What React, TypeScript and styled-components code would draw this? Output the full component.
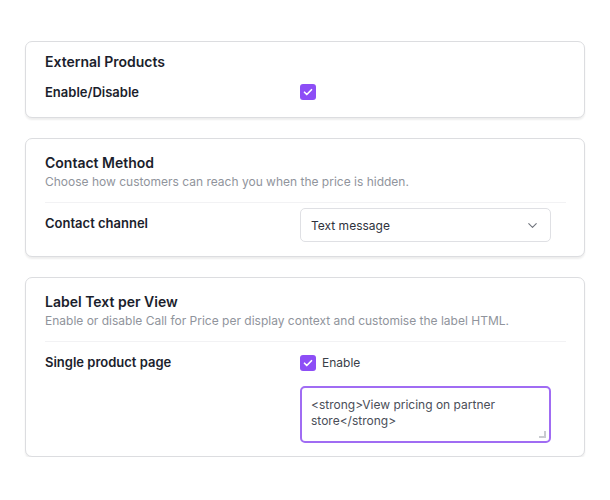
import React from "react";
import styled, { createGlobalStyle } from "styled-components";
import { ChevronDown } from "lucide-react";

const GlobalStyle = createGlobalStyle`
	body {
		margin: 0;
		background: #ffffff;
		font-family: "Inter", "Liberation Sans", sans-serif;
		-webkit-font-smoothing: antialiased;
	}
`;

const Page = styled.div`
	display: flex;
	flex-direction: column;
	gap: 20px;
	width: 560px;
	padding: 41px 0 0 25px;
`;

const Card = styled.section<{ $top: number; $bottom: number }>`
	display: flex;
	flex-direction: column;
	border: 1px solid #dcdde0;
	border-radius: 7px;
	box-shadow: 0 2px 2px rgba(0, 0, 0, 0.07);
	padding: ${({ $top, $bottom }) => `${$top}px 18px ${$bottom}px 19px`};
	background: #fff;
`;

const Title = styled.h2`
	margin: 0;
	font-size: 14px;
	line-height: 18px;
	font-weight: 600;
	color: #1b1e2c;
`;

const Description = styled.p`
	margin: 2px 0 0;
	font-size: 12px;
	line-height: 16px;
	color: #90949c;
`;

const Divider = styled.hr`
	border: 0;
	border-top: 1px solid #f2f2f4;
	margin: 12px 0 0;
`;

const Row = styled.div<{ $gap: number; $center?: boolean }>`
	display: grid;
	grid-template-columns: 255px 251px;
	align-items: ${({ $center }) => ($center ? "center" : "start")};
	margin-top: ${({ $gap }) => $gap}px;
`;

const Label = styled.div<{ $pad?: number }>`
	font-size: 13px;
	line-height: 16px;
	font-weight: 600;
	color: #1b1e2c;
	padding-top: ${({ $pad }) => $pad ?? 0}px;
`;

const Controls = styled.div<{ $pad?: number }>`
	display: flex;
	flex-direction: column;
	gap: 15px;
	padding-top: ${({ $pad }) => $pad ?? 0}px;
`;

const Box = styled.span`
	display: inline-flex;
	align-items: center;
	justify-content: center;
	width: 16px;
	height: 16px;
	border-radius: 3px;
	background: #8d4ef6;
	flex-shrink: 0;
`;

const CheckLine = styled.label`
	display: flex;
	align-items: center;
	gap: 6px;
	font-size: 12px;
	line-height: 16px;
	color: #3a3e48;
`;

const Select = styled.div`
	display: flex;
	align-items: center;
	justify-content: space-between;
	height: 34px;
	box-sizing: border-box;
	padding: 0 10px 0 10px;
	border: 1px solid #dfe0e4;
	border-radius: 5px;
	font-size: 12px;
	color: #2e323c;
	background: #fff;
`;

const AreaWrap = styled.div`
	position: relative;
	width: 251px;

	&::after {
		content: "";
		position: absolute;
		right: 5px;
		bottom: 5px;
		width: 5px;
		height: 5px;
		border-right: 2px solid #c9cbd0;
		border-bottom: 2px solid #c9cbd0;
		pointer-events: none;
	}
`;

const TextArea = styled.textarea`
	display: block;
	box-sizing: border-box;
	width: 251px;
	height: 57px;
	margin: 0;
	padding: 9px 9px;
	border: 2px solid #a06cf3;
	border-radius: 5px;
	font-family: "Inter", "Liberation Sans", sans-serif;
	font-size: 12px;
	line-height: 16px;
	color: #4a4e58;
	outline: none;
	resize: none;
`;

const Checkbox: React.FC = () => (
	<Box>
		<svg width="12" height="12" viewBox="0 0 24 24" fill="none" stroke="#fff" strokeWidth="3.4" strokeLinecap="round" strokeLinejoin="round">
			<path d="M5 12.5l4.5 4.5L19 7.5" />
		</svg>
	</Box>
);

const App: React.FC = () => {
	return (
		<>
			<GlobalStyle />
			<Page>
				<Card $top={11} $bottom={17}>
					<Title>External Products</Title>
					<Row $gap={13} $center>
						<Label>Enable/Disable</Label>
						<Controls>
							<Checkbox />
						</Controls>
					</Row>
				</Card>

				<Card $top={15} $bottom={14}>
					<Title>Contact Method</Title>
					<Description>Choose how customers can reach you when the price is hidden.</Description>
					<Divider />
					<Row $gap={5}>
						<Label $pad={7}>Contact channel</Label>
						<Select>
							<span>Text message</span>
							<ChevronDown size={15} color="#6f737c" strokeWidth={1.7} />
						</Select>
					</Row>
				</Card>

				<Card $top={15} $bottom={13}>
					<Title>Label Text per View</Title>
					<Description>Enable or disable Call for Price per display context and customise the label HTML.</Description>
					<Divider />
					<Row $gap={5}>
						<Label $pad={7}>Single product page</Label>
						<Controls $pad={8}>
							<CheckLine>
								<Checkbox />
								Enable
							</CheckLine>
							<AreaWrap>
								<TextArea defaultValue="<strong>View pricing on partner store</strong>" spellCheck={false} />
							</AreaWrap>
						</Controls>
					</Row>
				</Card>
			</Page>
		</>
	);
};

export default App;
